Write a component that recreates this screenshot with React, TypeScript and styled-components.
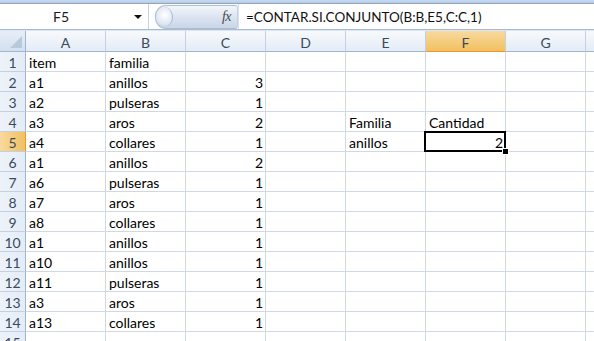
import * as React from "react";
import styled, { createGlobalStyle, css } from "styled-components";

const GlobalStyle = createGlobalStyle`
  html, body {
    margin: 0;
    padding: 0;
    background: #ffffff;
    overflow: hidden;
  }
  body {
    font-family: Lato, "Liberation Sans", sans-serif;
  }
`;

const COLS = ["A", "B", "C", "D", "E", "F", "G", "H"];
const COL_W = 80;

type Row = { [col: string]: string | number };

const rows: Row[] = [
  { A: "item", B: "familia" },
  { A: "a1", B: "anillos", C: 3 },
  { A: "a2", B: "pulseras", C: 1 },
  { A: "a3", B: "aros", C: 2, E: "Familia", F: "Cantidad" },
  { A: "a4", B: "collares", C: 1, E: "anillos", F: 2 },
  { A: "a1", B: "anillos", C: 2 },
  { A: "a6", B: "pulseras", C: 1 },
  { A: "a7", B: "aros", C: 1 },
  { A: "a8", B: "collares", C: 1 },
  { A: "a1", B: "anillos", C: 1 },
  { A: "a10", B: "anillos", C: 1 },
  { A: "a11", B: "pulseras", C: 1 },
  { A: "a3", B: "aros", C: 1 },
  { A: "a13", B: "collares", C: 1 },
  {},
];

const activeCol = "F";
const activeRow = 5;

const Window = styled.div`
  width: 594px;
  height: 341px;
  overflow: hidden;
  background: #dbe6f4;
  display: flex;
  flex-direction: column;
`;

const TopStrip = styled.div`
  flex-shrink: 0;
  height: 3px;
  background: linear-gradient(#c9daf0, #b7cbe6);
  border-bottom: 1px solid #8ea6c4;
`;

const FormulaBar = styled.div`
  flex-shrink: 0;
  height: 25px;
  display: flex;
  background: #ffffff;
  border-bottom: 1px solid #a7bad3;
`;

const NameBox = styled.div`
  flex-shrink: 0;
  width: 148px;
  display: flex;
  align-items: center;
  font-size: 14px;
  color: #1a1a1a;
  border-right: 1px solid #c5d2e3;
`;

const NameText = styled.span`
  flex: 1;
  text-align: center;
  padding-right: 12px;
`;

const Caret = styled.span`
  width: 0;
  height: 0;
  margin-right: 6px;
  border-left: 4px solid transparent;
  border-right: 4px solid transparent;
  border-top: 4px solid #111;
`;

const FxArea = styled.div`
  flex-shrink: 0;
  width: 89px;
  display: flex;
  align-items: center;
  padding-left: 6px;
  box-sizing: border-box;
  background: #ffffff;
`;

const FxPill = styled.div`
  flex: 1;
  height: 22px;
  display: flex;
  align-items: center;
  justify-content: space-between;
  border-radius: 11px 3px 3px 11px;
  background: linear-gradient(#f2f6fb, #d9e3f0 55%, #c9d6e7);
  border: 1px solid #aebdd1;
  border-right-color: #c6d2e2;
`;

const Knob = styled.span`
  width: 16px;
  height: 20px;
  border-radius: 50%;
  background: radial-gradient(circle at 55% 40%, #ffffff, #dfe7f2 60%, #b5c5da);
  border-right: 1px solid #a9b9ce;
`;

const FxLabel = styled.span`
  font-family: "Liberation Serif", serif;
  font-style: italic;
  font-size: 14px;
  color: #4a4a4a;
  margin-right: 6px;
  letter-spacing: -0.5px;
`;

const FormulaText = styled.div`
  flex: 1;
  display: flex;
  align-items: center;
  padding-left: 7px;
  font-size: 13.5px;
  color: #111;
  white-space: nowrap;
  border-left: 1px solid #d7e0ec;
`;

const Gap = styled.div`
  flex-shrink: 0;
  height: 1px;
  background: #dbe6f4;
`;

const Sheet = styled.div`
  flex-shrink: 0;
  display: grid;
  grid-template-columns: 26px repeat(${COLS.length}, ${COL_W}px);
  grid-auto-rows: 20px;
  grid-template-rows: 21px;
  background: #ffffff;
`;

const headerBase = css`
  display: flex;
  align-items: center;
  justify-content: center;
  font-size: 14px;
  color: #3a4a5c;
  border-right: 1px solid #9eb6ce;
  border-bottom: 1px solid #9eb6ce;
  box-sizing: border-box;
`;

const ColHeader = styled.div<{ $active: boolean }>`
  ${headerBase};
  padding-top: 2px;
  border-right-color: #c2d0e2;
  background: ${({ $active }) =>
    $active
      ? "linear-gradient(#f9d99f, #f1c15f)"
      : "linear-gradient(#f7f9fc, #e4ecf7)"};
  border-bottom-color: ${({ $active }) => ($active ? "#f29536" : "#9eb6ce")};
`;

const RowHeader = styled.div<{ $active: boolean }>`
  ${headerBase};
  padding-top: 1px;
  border-bottom-color: #c2d0e2;
  background: ${({ $active }) =>
    $active
      ? "linear-gradient(90deg, #f9d99f, #f1c15f)"
      : "linear-gradient(90deg, #eef3fa, #e4ecf7)"};
  border-right-color: ${({ $active }) => ($active ? "#f29536" : "#9eb6ce")};
`;

const Corner = styled.div`
  ${headerBase};
  background: linear-gradient(#e6eef8, #d3e0f0);
  justify-content: flex-end;
  align-items: flex-end;
  padding: 0 3px 3px 0;
`;

const Cell = styled.div<{ $numeric: boolean; $active: boolean }>`
  position: relative;
  display: flex;
  align-items: flex-end;
  justify-content: ${({ $numeric }) => ($numeric ? "flex-end" : "flex-start")};
  padding: 0 ${({ $numeric }) => ($numeric ? "2px" : "0")} 0 3px;
  box-sizing: border-box;
  font-size: 14px;
  line-height: 17px;
  color: #000;
  white-space: nowrap;
  border-right: 1px solid #d0d7e5;
  border-bottom: 1px solid #d0d7e5;
  ${({ $active }) =>
    $active &&
    css`
      &::after {
        content: "";
        position: absolute;
        left: -2px;
        top: -1px;
        right: -1px;
        bottom: -1px;
        border: 2px solid #000;
      }
    `}
`;

const FillHandle = styled.span`
  position: absolute;
  right: -4px;
  bottom: -4px;
  width: 5px;
  height: 5px;
  background: #000;
  border: 1px solid #fff;
  z-index: 2;
`;

const CornerTriangle = () => (
  <svg width="12" height="12" viewBox="0 0 12 12">
    <polygon points="12,0 12,12 0,12" fill="#b9c9dc" />
  </svg>
);

export default function App() {
  return (
    <Window>
      <GlobalStyle />
      <TopStrip />
      <FormulaBar>
        <NameBox>
          <NameText>F5</NameText>
          <Caret />
        </NameBox>
        <FxArea>
          <FxPill>
            <Knob />
            <FxLabel>fx</FxLabel>
          </FxPill>
        </FxArea>
        <FormulaText>=CONTAR.SI.CONJUNTO(B:B,E5,C:C,1)</FormulaText>
      </FormulaBar>
      <Gap />
      <Sheet>
        <Corner>
          <CornerTriangle />
        </Corner>
        {COLS.map((c) => (
          <ColHeader key={c} $active={c === activeCol}>
            {c}
          </ColHeader>
        ))}
        {rows.map((row, i) => {
          const n = i + 1;
          return (
            <React.Fragment key={n}>
              <RowHeader $active={n === activeRow}>{n}</RowHeader>
              {COLS.map((c) => {
                const v = row[c];
                const active = n === activeRow && c === activeCol;
                return (
                  <Cell
                    key={c}
                    $numeric={typeof v === "number"}
                    $active={active}
                  >
                    {v}
                    {active && <FillHandle />}
                  </Cell>
                );
              })}
            </React.Fragment>
          );
        })}
      </Sheet>
    </Window>
  );
}
